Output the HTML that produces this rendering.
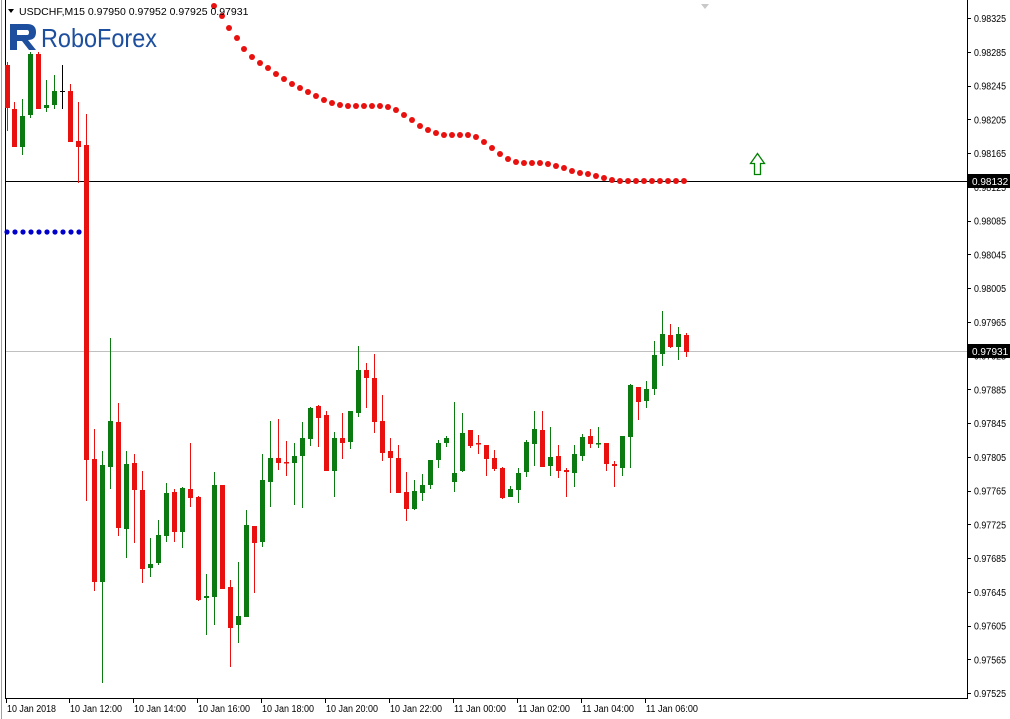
<!DOCTYPE html>
<html><head><meta charset="utf-8"><style>
html,body{margin:0;padding:0;background:#fff;}
body{width:1010px;height:719px;overflow:hidden;position:relative;font-family:"Liberation Sans",sans-serif;}
svg{position:absolute;left:0;top:0;}
</style></head><body>
<svg id="s" width="1010" height="719" viewBox="0 0 1010 719" xmlns="http://www.w3.org/2000/svg" font-family="Liberation Sans, sans-serif">
<rect width="1010" height="719" fill="#fff"/>
<line x1="1.5" y1="0" x2="1.5" y2="719" stroke="#a0a0a0"/>
<line x1="5.5" y1="0" x2="5.5" y2="698" stroke="#000"/>
<line x1="967.5" y1="0" x2="967.5" y2="698" stroke="#000"/>
<line x1="5" y1="698.5" x2="968" y2="698.5" stroke="#000"/>
<line x1="6" y1="351.5" x2="967" y2="351.5" stroke="#c0c0c0"/>
<line x1="6" y1="181.5" x2="967" y2="181.5" stroke="#000"/>
<polygon points="701,4 709,4 705,9" fill="#c8c8c8"/>
<g id="c"></g>
<g id="d"></g>
<path d="M754.5,174.5 V163.5 H750.5 L757.5,153.5 L764.5,163.5 H760.5 V174.5 Z" fill="none" stroke="#008000" stroke-width="1.3"/>
<g id="ax" fill="#000"></g>
<rect x="968" y="174" width="42" height="14" fill="#000"/>
<text x="972" y="185" font-size="10" fill="#fff">0.98132</text>
<rect x="968" y="344" width="42" height="14" fill="#000"/>
<text x="972" y="355" font-size="10" fill="#fff">0.97931</text>
<polygon points="8,9 14,9 11,13" fill="#000"/>
<text x="19" y="15" font-size="10.5" fill="#000">USDCHF,M15  0.97950 0.97952 0.97925 0.97931</text>
<g>
<path d="M10,24 H27 Q36,24 36,32 Q36,40 28,40 L36,50 H29 L22,41 H17 V50 H10 Z M17,30 V35 H27 Q29,35 29,32.5 Q29,30 27,30 Z" fill="#1d4f9e" fill-rule="evenodd"/>
<text x="41" y="47" font-size="26" fill="#1d4f9e" textLength="116" lengthAdjust="spacingAndGlyphs">RoboForex</text>
</g>
</svg>
<script>
var C=[[7,62,131,65,108,'r'],[14,102,147,109,147,'r'],[22,99,155,116,147,'g'],[30,52,118,54,115,'g'],[38,52,109,54,109,'r'],[46,80,112,105,108,'g'],[54,75,109,91,105,'g'],[62,65,109,91,92,'k'],[70,84,142,91,142,'r'],[78,102,183,141,147,'r'],[86,114,501,145,460,'r'],[94,429,591,459,582,'r'],[102,451,683,465,582,'g'],[110,338,489,421,467,'g'],[118,403,536,422,528,'r'],[126,451,558,464,529,'g'],[134,454,543,463,490,'r'],[142,471,583,490,569,'r'],[150,538,577,564,568,'g'],[158,520,565,535,563,'g'],[166,483,542,493,536,'g'],[174,489,542,492,532,'r'],[182,487,548,488,532,'g'],[190,443,507,489,498,'r'],[198,496,601,497,600,'r'],[206,574,635,596,598,'g'],[214,472,625,485,597,'g'],[222,485,589,485,589,'r'],[230,580,667,587,628,'r'],
[238,562,643,616,625,'g'],[246,510,617,525,617,'g'],[254,526,593,526,543,'r'],[262,454,547,480,542,'g'],[270,421,507,458,482,'g'],[278,419,470,458,463,'r'],[286,441,476,462,463,'r'],[294,443,505,456,463,'g'],[302,422,508,438,456,'g'],[310,407,446,408,439,'g'],[318,405,447,406,418,'r'],[326,411,471,415,471,'r'],[334,432,497,438,471,'g'],[342,413,459,438,443,'r'],[350,411,449,411,442,'g'],[358,346,417,370,413,'g'],[366,363,408,370,378,'r'],[374,354,433,378,422,'r'],[382,395,461,421,453,'r'],[390,438,493,451,458,'r'],[398,445,493,458,493,'r'],[406,472,521,492,509,'r'],[414,480,510,491,509,'g'],[422,474,501,485,493,'g'],[430,460,489,460,485,'g'],[438,440,468,443,460,'g'],[446,436,447,438,443,'g'],[454,402,492,473,482,'g'],[462,413,472,433,471,'g'],[470,430,448,430,446,'r'],[478,435,454,443,444,'r'],[486,445,476,445,459,'r'],[494,450,471,458,469,'r'],[502,467,499,468,498,'r'],[510,486,497,489,497,'g'],[518,468,503,473,490,'g'],[526,440,477,442,472,'g'],[534,411,466,429,444,'g'],[542,411,467,430,467,'r'],[550,427,476,457,466,'g'],[558,445,478,456,471,'r'],[566,468,497,470,472,'r'],[574,445,487,454,473,'g'],[582,434,461,437,456,'g'],[590,429,448,436,444,'r'],[598,427,448,443,444,'g'],[606,443,471,443,464,'r'],[614,461,487,464,466,'r'],[622,436,476,436,468,'g'],[630,384,468,385,437,'g'],[638,387,420,387,402,'r'],[646,381,408,389,401,'g'],[654,341,395,355,389,'g'],[662,311,366,334,354,'g'],[670,324,348,335,347,'r'],[678,327,360,334,347,'g'],[686,333,357,335,352,'r']];
var col={r:'#e8110f',g:'#0b7a10',k:'#000'};
var h='';
C.forEach(function(c){var f=col[c[5]];
h+='<line x1="'+(c[0]+.5)+'" y1="'+c[1]+'" x2="'+(c[0]+.5)+'" y2="'+c[2]+'" stroke="'+f+'"/>';
var bh=Math.max(c[4]-c[3],1.5);
if(c[5]=='k'){h+='<line x1="'+(c[0]-2)+'" y1="'+(c[3]+.5)+'" x2="'+(c[0]+3)+'" y2="'+(c[3]+.5)+'" stroke="#000"/>';}
else h+='<rect x="'+(c[0]-2)+'" y="'+c[3]+'" width="5" height="'+bh+'" fill="'+f+'"/>';});
document.getElementById('c').innerHTML=h;
var R=[[214,6],[222,16],[229,28],[237,38],[244,49],[252,57],[260,63],[268,68],[276,74],[284,79],[292,84],[300,88],[308,92],[316,96],[324,100],[332,103],[340,105],[348,106],[356,106],[364,106],[372,106],[380,106],[388,107],[396,110],[404,115],[412,120],[420,126],[428,130],[436,133],[444,135],[452,135],[460,135],[468,135],[476,137],[484,142],[492,148],[500,154],[508,159],[516,162],[524,163],[532,163],[540,163],[548,164],[556,166],[564,168],[572,171],[580,173],[588,174],[596,176],[604,178],[612,180],[620,181],[628,181],[636,181],[644,181],[652,181],[660,181],[668,181],[676,181],[684,181]];
var d='';R.forEach(function(p){d+='<circle cx="'+p[0]+'" cy="'+p[1]+'" r="3" fill="#e8110f"/>';});
for(var i=0;i<10;i++)d+='<circle cx="'+(7+8*i)+'" cy="232" r="2.6" fill="#0000cc"/>';
document.getElementById('d').innerHTML=d;
var a='';
for(var i=0;i<21;i++){var y=18+i*33.75;var v=(0.98325-i*0.0004).toFixed(5);
a+='<line x1="967" y1="'+(Math.round(y)+.5)+'" x2="971" y2="'+(Math.round(y)+.5)+'" stroke="#000"/><text x="974" y="'+(y+4)+'" font-size="10" textLength="32" lengthAdjust="spacingAndGlyphs">'+v+'</text>';}
var T=[[6,'10 Jan 2018'],[69,'10 Jan 12:00'],[133,'10 Jan 14:00'],[197,'10 Jan 16:00'],[261,'10 Jan 18:00'],[325,'10 Jan 20:00'],[389,'10 Jan 22:00'],[453,'11 Jan 00:00'],[517,'11 Jan 02:00'],[581,'11 Jan 04:00'],[645,'11 Jan 06:00']];
T.forEach(function(t){var w=t[1].length==11?49:52;a+='<line x1="'+(t[0]+.5)+'" y1="698" x2="'+(t[0]+.5)+'" y2="703" stroke="#000"/><text x="'+(t[0]+1)+'" y="712" font-size="10" textLength="'+w+'" lengthAdjust="spacingAndGlyphs">'+t[1]+'</text>';});
document.getElementById('ax').innerHTML=a;
</script>
</body></html>
